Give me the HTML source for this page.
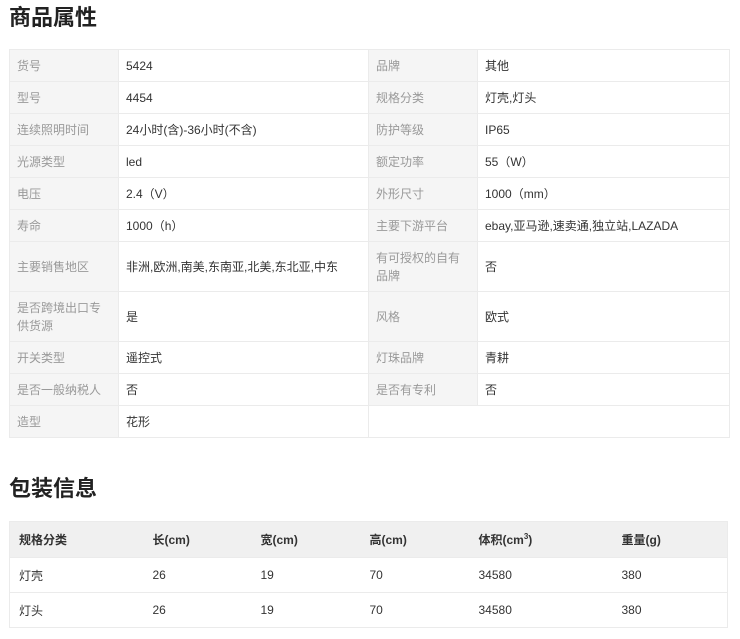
<!DOCTYPE html>
<html><head><meta charset="utf-8"><style>
*{margin:0;padding:0;box-sizing:border-box}
body{width:740px;height:639px;background:#fff;font-family:"Liberation Sans","Noto Sans CJK SC",sans-serif;font-size:12px;color:#333;position:relative;overflow:hidden}
h2{position:absolute;left:9px;font-size:22px;font-weight:bold;color:#222;line-height:1}
table{position:absolute;border-collapse:collapse;table-layout:fixed}
#t1{left:9px;top:49px;width:720px}
#t1 td{border:1px solid #ebebeb;padding:0 7px;height:32px;line-height:18px;vertical-align:middle}
#t1 td.l{background:#f5f5f5;color:#999}
#t2{left:9px;top:521px;width:719px;border:1px solid #ebebeb}
#t2 td{padding:0 9px;height:35px;border-bottom:1px solid #ebebeb}
#t2 tr.h td{background:#f0f0f0;height:36px;font-weight:bold;color:#333}
sup{font-size:8px}
</style></head><body>
<h2 style="top:7px">商品属性</h2>
<table id="t1">
<colgroup><col style="width:109px"><col style="width:250px"><col style="width:109px"><col style="width:252px"></colgroup>
<tr><td class="l">货号</td><td>5424</td><td class="l">品牌</td><td>其他</td></tr>
<tr><td class="l">型号</td><td>4454</td><td class="l">规格分类</td><td>灯壳,灯头</td></tr>
<tr><td class="l">连续照明时间</td><td>24小时(含)-36小时(不含)</td><td class="l">防护等级</td><td>IP65</td></tr>
<tr><td class="l">光源类型</td><td>led</td><td class="l">额定功率</td><td>55（W）</td></tr>
<tr><td class="l">电压</td><td>2.4（V）</td><td class="l">外形尺寸</td><td>1000（mm）</td></tr>
<tr><td class="l">寿命</td><td>1000（h）</td><td class="l">主要下游平台</td><td>ebay,亚马逊,速卖通,独立站,LAZADA</td></tr>
<tr><td class="l" style="height:50px">主要销售地区</td><td>非洲,欧洲,南美,东南亚,北美,东北亚,中东</td><td class="l">有可授权的自有品牌</td><td>否</td></tr>
<tr><td class="l" style="height:50px">是否跨境出口专供货源</td><td>是</td><td class="l">风格</td><td>欧式</td></tr>
<tr><td class="l">开关类型</td><td>遥控式</td><td class="l">灯珠品牌</td><td>青耕</td></tr>
<tr><td class="l">是否一般纳税人</td><td>否</td><td class="l">是否有专利</td><td>否</td></tr>
<tr><td class="l">造型</td><td>花形</td><td colspan="2" style="border-left:none"></td></tr>
</table>
<h2 style="top:478px">包装信息</h2>
<table id="t2">
<colgroup><col style="width:134px"><col style="width:108px"><col style="width:109px"><col style="width:109px"><col style="width:143px"><col></colgroup>
<tr class="h"><td>规格分类</td><td>长(cm)</td><td>宽(cm)</td><td>高(cm)</td><td>体积(cm<sup>3</sup>)</td><td>重量(g)</td></tr>
<tr><td>灯壳</td><td>26</td><td>19</td><td>70</td><td>34580</td><td>380</td></tr>
<tr><td>灯头</td><td>26</td><td>19</td><td>70</td><td>34580</td><td>380</td></tr>
</table>
</body></html>
